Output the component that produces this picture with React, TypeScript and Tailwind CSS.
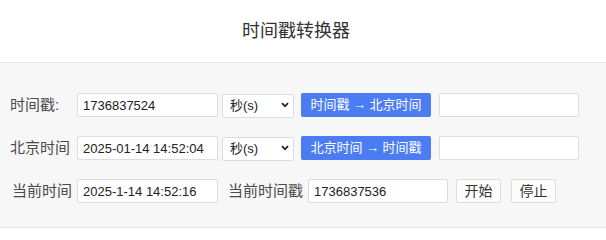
import React from "react";

const font = { fontFamily: '"Liberation Sans", "Noto Sans CJK SC", sans-serif' };

function Unit() {
  return (
    <div className="relative ml-[4px] h-6 w-[72px]">
      <select
        defaultValue="s"
        className="h-6 w-full appearance-none rounded-[2px] border border-[#dcdcdc] bg-white pl-[7px] text-[13px] text-[#222] outline-none"
      >
        <option value="s">秒(s)</option>
        <option value="ms">毫秒(ms)</option>
      </select>
      <svg
        className="pointer-events-none absolute right-[5px] top-[9px]"
        width="8"
        height="6"
        viewBox="0 0 8 6"
      >
        <path d="M1 1.2 4 4.3 7 1.2" fill="none" stroke="#222" strokeWidth="1.8" />
      </svg>
    </div>
  );
}

export default function App() {
  return (
    <div className="w-[606px] h-[240px] bg-white" style={font}>
      <div className="flex h-[63px] items-center justify-center border-b border-[#e6e6e6] pr-[14px]">
        <h1 className="text-[18px] text-[#333]">时间戳转换器</h1>
      </div>

      <div className="flex flex-col gap-[19px] border-b border-[#e3e3e3] bg-[#f7f7f7] pb-[24px] pl-[10px] pt-[30px]">
        <div className="flex h-6 items-center">
          <span className="w-[67px] text-[15px] text-[#4a4a4a]">时间戳:</span>
          <input
            defaultValue="1736837524"
            className="h-6 w-[141px] rounded-[2px] border border-[#dcdcdc] bg-white px-[5px] text-[13px] text-[#222] outline-none"
          />
          <Unit />
          <button className="ml-[7px] h-6 w-[130px] rounded-[2px] bg-[#4c7cf2] text-[13px] text-white">
            时间戳 → 北京时间
          </button>
          <input className="ml-[8px] h-6 w-[140px] rounded-[2px] border border-[#dcdcdc] bg-white px-[5px] text-[13px] outline-none" />
        </div>

        <div className="flex h-6 items-center">
          <span className="w-[67px] text-[15px] text-[#4a4a4a]">北京时间</span>
          <input
            defaultValue="2025-01-14 14:52:04"
            className="h-6 w-[141px] rounded-[2px] border border-[#dcdcdc] bg-white px-[5px] text-[13px] text-[#222] outline-none"
          />
          <Unit />
          <button className="ml-[7px] h-6 w-[130px] rounded-[2px] bg-[#4c7cf2] text-[13px] text-white">
            北京时间 → 时间戳
          </button>
          <input className="ml-[8px] h-6 w-[140px] rounded-[2px] border border-[#dcdcdc] bg-white px-[5px] text-[13px] outline-none" />
        </div>

        <div className="flex h-6 items-center">
          <span className="w-[67px] pl-[2px] text-[15px] text-[#4a4a4a]">当前时间</span>
          <input
            defaultValue="2025-1-14 14:52:16"
            className="h-6 w-[141px] rounded-[2px] border border-[#dcdcdc] bg-white px-[5px] text-[13px] text-[#222] outline-none"
          />
          <span className="ml-[10px] w-[80px] text-[15px] text-[#4a4a4a]">当前时间戳</span>
          <input
            defaultValue="1736837536"
            className="h-6 w-[140px] rounded-[2px] border border-[#dcdcdc] bg-white px-[5px] text-[13px] text-[#222] outline-none"
          />
          <button className="ml-[8px] h-6 w-[45px] rounded-[2px] border border-[#dcdcdc] bg-[#fcfcfc] text-[14px] text-[#333]">
            开始
          </button>
          <button className="ml-[10px] h-6 w-[45px] rounded-[2px] border border-[#dcdcdc] bg-[#fcfcfc] text-[14px] text-[#333]">
            停止
          </button>
        </div>
      </div>
    </div>
  );
}
